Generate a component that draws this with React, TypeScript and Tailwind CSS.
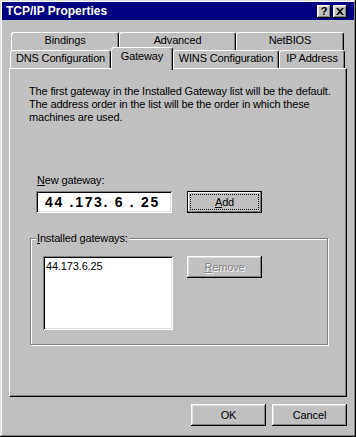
import type { ReactNode } from 'react';

const raised =
  'shadow-[inset_-1px_-1px_#000,inset_1px_1px_#fff,inset_-2px_-2px_#808080,inset_2px_2px_#dfdfdf]';
const sunken =
  'shadow-[inset_1px_1px_#808080,inset_-1px_-1px_#fff,inset_2px_2px_#000,inset_-2px_-2px_#dfdfdf]';

function Tab({ label, w, selected }: { label: string; w: string; selected?: boolean }) {
  return (
    <div
      className={`${w} ${
        selected ? 'relative z-10 h-[23px] pt-[2px]' : 'mt-[3px] h-[18px] pt-[1px]'
      } shrink-0 rounded-t-[3px] border-l border-t border-r border-l-white border-t-white border-r-black bg-[#c0c0c0] text-center shadow-[inset_-1px_0_#808080]`}
    >
      {label}
    </div>
  );
}

function BackTab({ label, w }: { label: string; w: string }) {
  return (
    <div
      className={`${w} h-[18px] shrink-0 rounded-t-[3px] border-l border-t border-r border-l-white border-t-white border-r-black bg-[#c0c0c0] pt-[1px] text-center shadow-[inset_-1px_0_#808080]`}
    >
      {label}
    </div>
  );
}

function Button({ children, className = '' }: { children: ReactNode; className?: string }) {
  return (
    <div
      className={`flex h-[22px] w-[75px] items-center justify-center bg-[#c0c0c0] ${raised} ${className}`}
    >
      {children}
    </div>
  );
}

export default function App() {
  return (
    <div className="relative flex h-[437px] w-[356px] flex-col bg-[#c0c0c0] font-['Liberation_Sans',Arial,sans-serif] text-[11px] leading-[13px] tracking-[-0.15px] text-black shadow-[inset_-1px_-1px_#000,inset_1px_1px_#dfdfdf,inset_-2px_-2px_#808080,inset_2px_2px_#fff]">
      {/* title bar */}
      <div className="mx-[2px] mt-[2px] flex h-[18px] items-center bg-[#000080] pl-[4px] pr-[7px]">
        <span className="text-[12px] font-bold tracking-normal text-white">TCP/IP Properties</span>
        <div className="ml-auto flex gap-[2px]">
          <div className={`flex h-[13px] w-[14px] items-center justify-center bg-[#c0c0c0] text-[11px] font-bold leading-none ${raised}`}>
            ?
          </div>
          <div className={`flex h-[13px] w-[14px] items-center justify-center bg-[#c0c0c0] ${raised}`}>
            <svg width="8" height="7" viewBox="0 0 8 7">
              <path d="M0 0h2l2 2 2-2h2L5 3.5 8 7H6L4 5 2 7H0l3-3.5z" fill="#000" />
            </svg>
          </div>
        </div>
      </div>

      {/* back row of tabs */}
      <div className="relative -mb-[3px] mt-[12px] flex pl-[11px]">
        <BackTab label="Bindings" w="w-[108px]" />
        <BackTab label="Advanced" w="w-[117px]" />
        <BackTab label="NetBIOS" w="w-[108px]" />
      </div>

      {/* front row of tabs */}
      <div className="relative flex h-[21px] items-start pl-[10px]">
        <Tab label="DNS Configuration" w="w-[101px]" />
        <Tab label="Gateway" w="w-[62px]" selected />
        <Tab label="WINS Configuration" w="w-[106px]" />
        <Tab label="IP Address" w="w-[66px]" />
      </div>

      {/* panel */}
      <div className="ml-[9px] flex h-[329px] w-[338px] flex-col border border-b-black border-l-white border-r-black border-t-white shadow-[inset_-1px_-1px_#808080]">
        <p className="whitespace-nowrap pl-[19px] pt-[16px]">
          The first gateway in the Installed Gateway list will be the default.
          <br />
          The address order in the list will be the order in which these
          <br />
          machines are used.
        </p>

        <div className="mt-[50px] pl-[27px]">
          <u>N</u>ew gateway:
        </div>
        <div className="mt-[4px] flex pl-[26px]">
          <div className={`flex h-[22px] w-[136px] items-center bg-white pl-[9px] ${sunken}`}>
            <span className="whitespace-pre text-[14px] font-bold leading-none tracking-[1.7px]">
              44 .173. 6 . 25
            </span>
          </div>
          <div className="ml-[15px] h-[22px] w-[75px] border border-black">
            <div className="flex h-full w-full items-center justify-center p-[3px] shadow-[inset_-1px_-1px_#808080,inset_1px_1px_#fff]">
              <div className="flex h-full w-full items-center justify-center outline outline-1 outline-dotted outline-black">
                <span>
                  <u>A</u>dd
                </span>
              </div>
            </div>
          </div>
        </div>

        <fieldset className="ml-[20px] mt-[19px] h-[113px] w-[298px] border border-[#808080] p-0 shadow-[inset_1px_1px_#fff,1px_1px_#fff]">
          <legend className="ml-[5px] bg-[#c0c0c0] px-[1px]">
            <u>I</u>nstalled gateways:
          </legend>
          <div className="mt-[11px] flex pl-[12px]">
            <div className={`h-[74px] w-[130px] bg-white pl-[3px] pt-[4px] ${sunken}`}>44.173.6.25</div>
            <Button className="ml-[14px]">
              <span className="text-[#808080] [text-shadow:1px_1px_0_#fff]">
                <u>R</u>emove
              </span>
            </Button>
          </div>
        </fieldset>
      </div>

      {/* bottom buttons */}
      <div className="mt-[7px] flex justify-end gap-[6px] pr-[9px]">
        <Button>OK</Button>
        <Button>Cancel</Button>
      </div>
    </div>
  );
}
